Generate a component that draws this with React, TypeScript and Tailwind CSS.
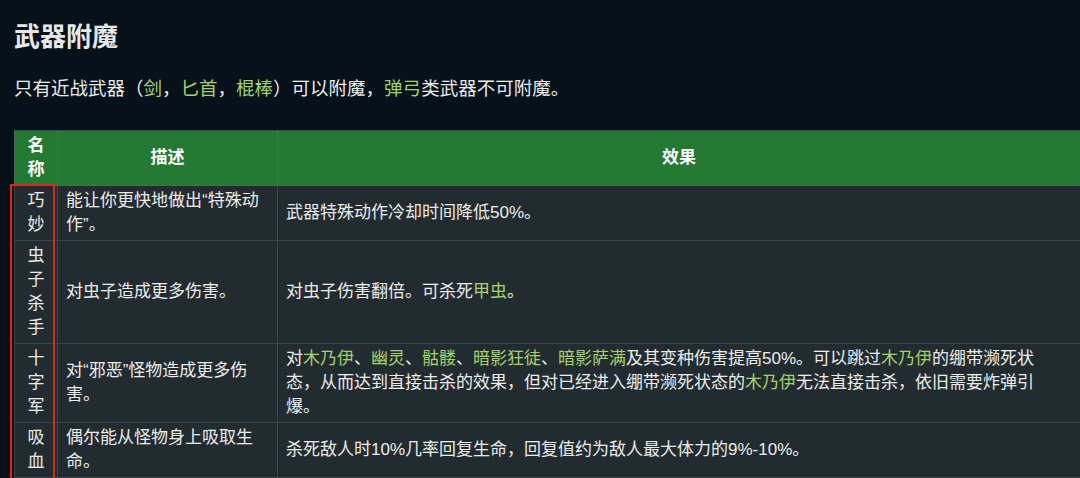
const G = ({ children }: { children: React.ReactNode }) => (
  <span className="text-[#a5d36b]">{children}</span>
)

const rows = [
  {
    name: '巧妙',
    desc: '能让你更快地做出“特殊动作”。',
    effect: <>武器特殊动作冷却时间降低50%。</>,
  },
  {
    name: '虫子杀手',
    desc: '对虫子造成更多伤害。',
    effect: (
      <>
        对虫子伤害翻倍。可杀死<G>甲虫</G>。
      </>
    ),
  },
  {
    name: '十字军',
    desc: '对“邪恶”怪物造成更多伤害。',
    effect: (
      <>
        对<G>木乃伊</G>、<G>幽灵</G>、<G>骷髅</G>、<G>暗影狂徒</G>、<G>暗影萨满</G>
        及其变种伤害提高50%。可以跳过<G>木乃伊</G>
        的绷带濒死状态，从而达到直接击杀的效果，但对已经进入绷带濒死状态的<G>木乃伊</G>
        无法直接击杀，依旧需要炸弹引爆。
      </>
    ),
  },
  {
    name: '吸血',
    desc: '偶尔能从怪物身上吸取生命。',
    effect: <>杀死敌人时10%几率回复生命，回复值约为敌人最大体力的9%-10%。</>,
  },
]

export default function App() {
  return (
    <div
      className="h-screen overflow-hidden bg-[#06111a] text-[#ececec]"
      style={{ fontFamily: '"Liberation Sans", "Noto Sans CJK SC", sans-serif' }}
    >
      <div className="pl-[14px] pt-[20px]">
        <h2 className="text-[26px] leading-[34px] font-bold text-[#e8e8e8]">武器附魔</h2>
        <p className="mt-[21px] text-[18.5px] leading-[28px]">
          只有近战武器（<G>剑</G>，<G>匕首</G>，<G>棍棒</G>）可以附魔，<G>弹弓</G>类武器不可附魔。
        </p>

        <div className="relative mt-[27px]">
          <table className="table-fixed border-collapse w-[1080px] text-[17px] leading-[24px]">
            <colgroup>
              <col className="w-[43px]" />
              <col className="w-[220px]" />
              <col />
            </colgroup>
            <thead>
              <tr className="bg-[#247a33] text-white font-bold">
                <th className="border border-[#4d6a54] border-t-[#3e4a4c] px-2 py-[3px] text-center">名称</th>
                <th className="border border-[#4d6a54] border-t-[#3e4a4c] px-2 py-[3px] text-center">描述</th>
                <th className="border border-[#4d6a54] border-t-[#3e4a4c] px-2 py-[3px] text-center">
                  <div className="max-w-[786px]">效果</div>
                </th>
              </tr>
            </thead>
            <tbody>
              {rows.map((r) => (
                <tr key={r.name} className="bg-[#222c30]">
                  <td className="border border-[#3c4749] px-2 py-[3px] text-center align-middle">{r.name}</td>
                  <td className="border border-[#3c4749] px-2 py-[3px] align-middle">{r.desc}</td>
                  <td className="border border-[#3c4749] px-2 py-[3px] align-middle">
                    <div className="max-w-[756px]">{r.effect}</div>
                  </td>
                </tr>
              ))}
            </tbody>
          </table>
          {/* selection outline over the name column */}
          <div className="pointer-events-none absolute left-[-4px] top-[54px] w-[45px] h-[320px] border-2 border-[#e3241b]" />
        </div>
      </div>
    </div>
  )
}
